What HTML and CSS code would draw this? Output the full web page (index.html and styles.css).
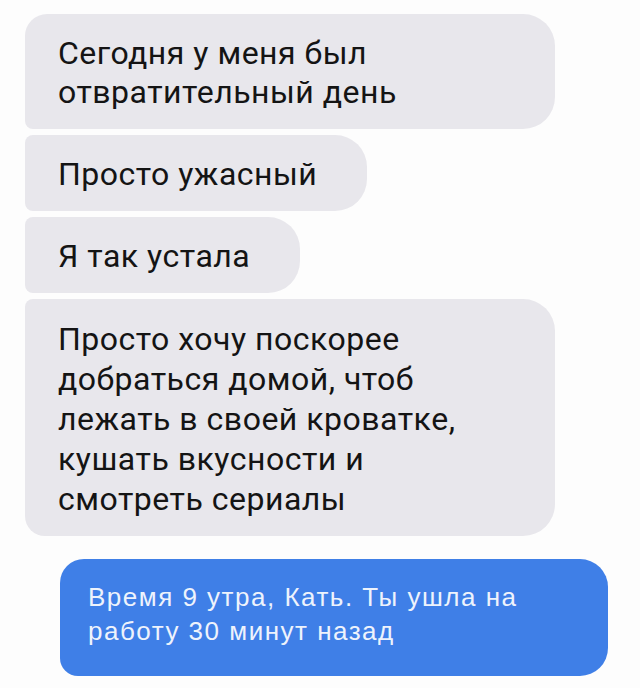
FILE: index.html
```html
<!DOCTYPE html>
<html lang="ru">
<head>
<meta charset="UTF-8">
<meta name="viewport" content="width=device-width, initial-scale=1.0">
<title>Сообщения</title>
<link rel="stylesheet" href="styles.css">
</head>
<body>

<div class="chat">
    <!-- Входящие сообщения -->
    <div class="group">
        <div class="bubble in first wide">Сегодня у меня был<br>отвратительный день</div>
        <div class="bubble in">Просто ужасный</div>
        <div class="bubble in">Я так устала</div>
        <div class="bubble in last wide">Просто хочу поскорее<br>добраться домой, чтоб<br>лежать в своей кроватке,<br>кушать вкусности и<br>смотреть сериалы</div>
    </div>

    <!-- Исходящее сообщение -->
    <div class="bubble out">Время 9 утра, Кать. Ты ушла на<br>работу 30 минут назад</div>
</div>

</body>
</html>
```

FILE: styles.css
```css
body {
    margin: 0;
    padding: 0;
    background-color: #fdfdfd;
}

.chat {
    width: 640px;
    padding: 14px 0 0 25px;
    box-sizing: border-box;
}

.group {
    display: flex;
    flex-direction: column;
    align-items: flex-start;
    gap: 6px;
}

.bubble {
    box-sizing: border-box;
}

/* Серые пузыри собеседника */
.bubble.in {
    background-color: #e8e7ec;
    color: #141414;
    font-family: Roboto, "Noto Sans", sans-serif;
    font-size: 32px;
    letter-spacing: 0.5px;
    line-height: 39px;
    padding: 20px 50px 17px 33px;
    border-radius: 8px 32px 32px 8px;
}

.bubble.wide {
    width: 530px;
}

.bubble.first {
    border-top-left-radius: 22px;
}

.bubble.last {
    line-height: 40px;
    border-bottom-left-radius: 20px;
}

/* Синий пузырь — мой ответ */
.bubble.out {
    margin: 23px 0 0 35px;
    width: 548px;
    height: 117px;
    padding: 21px 10px 0 28px;
    background-color: #3f7fe7;
    color: #eef3fc;
    font-family: "Liberation Sans", Arial, sans-serif;
    font-size: 26px;
    letter-spacing: 1.5px;
    line-height: 34px;
    border-radius: 24px 28px 28px 18px;
}
```
